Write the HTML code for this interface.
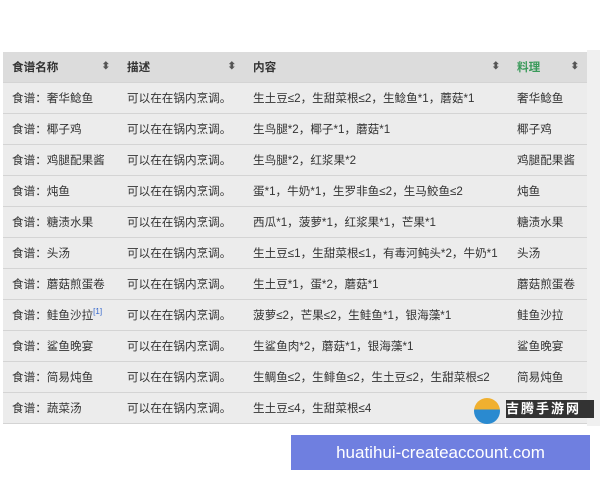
<!DOCTYPE html><html><head><meta charset="utf-8"><style>
body{margin:0;width:600px;height:480px;background:#fff;position:relative;overflow:hidden;font-family:"Liberation Sans","Noto Sans CJK SC",sans-serif;}
.bgr{position:absolute;left:587px;top:50px;width:13px;height:376px;background:#f0f0f0}
table{position:absolute;left:3px;top:52px;width:584px;border-collapse:collapse;font-size:11.6px;color:#333}
td,th{height:30px;padding:0 0 0 9px;border-bottom:1px solid #d4d4d4;text-align:left;white-space:nowrap}
th{background:#dcdcdc;font-weight:bold;position:relative}
td{background:#ececec}
th span{position:absolute;right:8px;top:9px;font-size:10px;line-height:12px;color:#555}
.g{color:#3a9a5a}
.banner{position:absolute;left:291px;top:435px;width:299px;height:35px;background:#6f7fe0;color:#fff;font-size:17px;line-height:35px;text-align:center}
</style></head><body>
<div class="bgr"></div>
<table>
<colgroup><col style="width:115px"><col style="width:126px"><col style="width:264px"><col></colgroup>
<tr><th>食谱名称<span>⬍</span></th><th>描述<span>⬍</span></th><th>内容<span>⬍</span></th><th class="g">料理<span>⬍</span></th></tr>
<tr><td>食谱：奢华鲶鱼</td><td>可以在在锅内烹调。</td><td>生土豆≤2，生甜菜根≤2，生鲶鱼*1，蘑菇*1</td><td>奢华鲶鱼</td></tr>
<tr><td>食谱：椰子鸡</td><td>可以在在锅内烹调。</td><td>生鸟腿*2，椰子*1，蘑菇*1</td><td>椰子鸡</td></tr>
<tr><td>食谱：鸡腿配果酱</td><td>可以在在锅内烹调。</td><td>生鸟腿*2，红浆果*2</td><td>鸡腿配果酱</td></tr>
<tr><td>食谱：炖鱼</td><td>可以在在锅内烹调。</td><td>蛋*1，牛奶*1，生罗非鱼≤2，生马鲛鱼≤2</td><td>炖鱼</td></tr>
<tr><td>食谱：糖渍水果</td><td>可以在在锅内烹调。</td><td>西瓜*1，菠萝*1，红浆果*1，芒果*1</td><td>糖渍水果</td></tr>
<tr><td>食谱：头汤</td><td>可以在在锅内烹调。</td><td>生土豆≤1，生甜菜根≤1，有毒河鲀头*2，牛奶*1</td><td>头汤</td></tr>
<tr><td>食谱：蘑菇煎蛋卷</td><td>可以在在锅内烹调。</td><td>生土豆*1，蛋*2，蘑菇*1</td><td>蘑菇煎蛋卷</td></tr>
<tr><td>食谱：鲑鱼沙拉<sup style="color:#36c;font-size:8px">[1]</sup></td><td>可以在在锅内烹调。</td><td>菠萝≤2，芒果≤2，生鲑鱼*1，银海藻*1</td><td>鲑鱼沙拉</td></tr>
<tr><td>食谱：鲨鱼晚宴</td><td>可以在在锅内烹调。</td><td>生鲨鱼肉*2，蘑菇*1，银海藻*1</td><td>鲨鱼晚宴</td></tr>
<tr><td>食谱：简易炖鱼</td><td>可以在在锅内烹调。</td><td>生鲷鱼≤2，生鲱鱼≤2，生土豆≤2，生甜菜根≤2</td><td>简易炖鱼</td></tr>
<tr><td>食谱：蔬菜汤</td><td>可以在在锅内烹调。</td><td>生土豆≤4，生甜菜根≤4</td><td></td></tr>
</table>
<div style="position:absolute;left:474px;top:398px;width:26px;height:26px;border-radius:50%;background:linear-gradient(#f0b030 45%,#2a8ad0 45%)"></div>
<div style="position:absolute;left:506px;top:400px;width:88px;height:18px;background:#333;color:#fff;font-size:13px;line-height:18px;font-weight:bold;letter-spacing:2px">吉腾手游网</div>
<div class="banner">huatihui-createaccount.com</div>
</body></html>
